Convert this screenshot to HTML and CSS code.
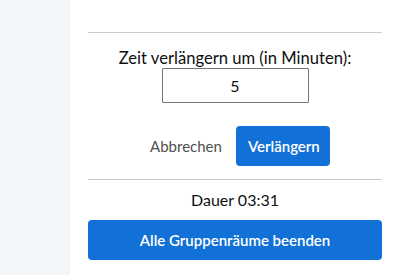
FILE: index.html
```html
<!DOCTYPE html>
<html lang="de">
<head>
<meta charset="utf-8">
<link rel="stylesheet" href="styles.css">
</head>
<body>
<div class="layout">
  <aside class="sidebar"></aside>
  <main class="panel">
    <div class="divider"></div>
    <label class="label" for="mins">Zeit verlängern um (in Minuten):</label>
    <div class="input-row"><input id="mins" class="minutes" type="text" value="5"></div>
    <div class="actions">
      <button class="btn-link">Abbrechen</button>
      <button class="btn-primary">Verlängern</button>
    </div>
    <div class="divider"></div>
    <div class="duration">Dauer 03:31</div>
    <button class="btn-primary btn-block">Alle Gruppenräume beenden</button>
  </main>
</div>
</body>
</html>
```
FILE: styles.css
```css
html, body {
  margin: 0;
  padding: 0;
  background: #ffffff;
  font-family: Lato, "Noto Sans", sans-serif;
  color: #0f0f0f;
}
.layout {
  display: flex;
  height: 275px;
}
.sidebar {
  width: 70px;
  flex: none;
  background: #f3f6f9;
}
.panel {
  flex: 1;
  display: flex;
  flex-direction: column;
  padding: 32px 14px 0 18px;
}
.divider {
  height: 1px;
  background: #c5ced6;
}
.label {
  margin-top: 15px;
  text-align: center;
  font-size: 16.6px;
  line-height: 20px;
}
.input-row {
  display: flex;
  justify-content: center;
}
.minutes {
  box-sizing: border-box;
  width: 147px;
  height: 35px;
  border: 1px solid #767676;
  border-radius: 1px;
  text-align: center;
  font-family: inherit;
  font-size: 16px;
  color: #0f0f0f;
  padding: 0;
}
.actions {
  margin-top: 23px;
  display: flex;
  justify-content: center;
  align-items: center;
  gap: 14px;
  margin-bottom: 13px;
  padding-left: 10px;
}
.btn-link {
  background: none;
  border: 0;
  font-family: inherit;
  font-size: 15px;
  color: #4f4f4f;
  padding: 0;
}
.btn-primary {
  height: 40px;
  padding: 0 12px;
  background: #1271d6;
  color: #ffffff;
  border: 0;
  border-radius: 4px;
  font-family: inherit;
  font-weight: 600;
  font-size: 15px;
}
.actions .btn-primary {
  width: 94px;
}
.duration {
  margin-top: 10px;
  text-align: center;
  font-size: 16px;
  line-height: 20px;
}
.btn-block {
  margin-top: 10px;
  width: 100%;
}
```
